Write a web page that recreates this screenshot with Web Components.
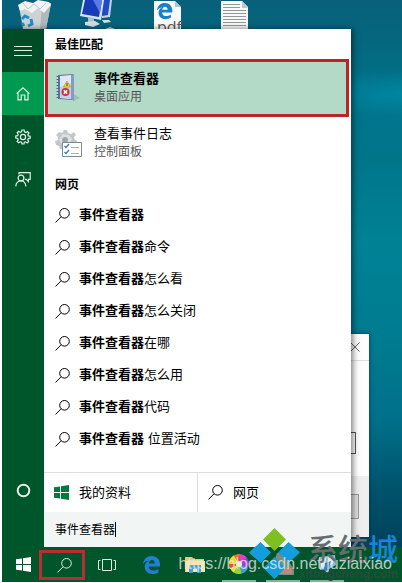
<!DOCTYPE html>
<html lang="zh-CN">
<head>
<meta charset="utf-8">
<meta name="viewport" content="width=device-width, initial-scale=1">
<title>事件查看器</title>
<style>
  html, body { margin: 0; height: 100%; }
  body {
    background: #fff;
    color: #000;
    font-family: "Liberation Sans", "Noto Sans CJK SC", sans-serif;
    overflow: hidden;
  }
</style>
</head>
<body>
<desktop-screen>
  <desktop-icon slot="icon" name="bin" style="left:14px"></desktop-icon>
  <desktop-icon slot="icon" name="computer" style="left:75px"></desktop-icon>
  <desktop-icon slot="icon" name="pdf" style="left:150px"></desktop-icon>
  <desktop-icon slot="icon" name="text" style="left:218px"></desktop-icon>
  <back-window slot="window"></back-window>
  <start-menu slot="menu">
    <menu-rail slot="rail"></menu-rail>
    <result-heading>最佳匹配</result-heading>
    <app-result icon="viewer" selected>事件查看器<span slot="kind">桌面应用</span></app-result>
    <app-result icon="panel">查看事件日志<span slot="kind">控制面板</span></app-result>
    <result-heading>网页</result-heading>
    <web-suggestion><b>事件查看器</b></web-suggestion>
    <web-suggestion><b>事件查看器</b>命令</web-suggestion>
    <web-suggestion><b>事件查看器</b>怎么看</web-suggestion>
    <web-suggestion><b>事件查看器</b>怎么关闭</web-suggestion>
    <web-suggestion><b>事件查看器</b>在哪</web-suggestion>
    <web-suggestion><b>事件查看器</b>怎么用</web-suggestion>
    <web-suggestion><b>事件查看器</b>代码</web-suggestion>
    <web-suggestion><b>事件查看器</b> 位置活动</web-suggestion>
    <search-scope slot="foot"></search-scope>
    <search-box slot="foot" value="事件查看器"></search-box>
  </start-menu>
  <task-bar slot="bar"></task-bar>
  <site-mark slot="mark">https://blog.csdn.net/juziaixiao</site-mark>
</desktop-screen>

<script>
const ICONS = {
  search: `<svg width="15" height="15" viewBox="0 0 15 15" fill="none" stroke="currentColor"><circle cx="9.5" cy="5.3" r="4.8"/><path d="M6 8.8L.6 14.4"/></svg>`,
  windows: `<svg width="15" height="15" viewBox="0 0 15 15" fill="currentColor"><path d="M0 2.2L6 1.4V7H0zM7 1.2L15 0V7H7zM0 8H6V13.6L0 12.8zM7 8H15V15L7 13.8z"/></svg>`,
  menu: `<svg width="18" height="12" viewBox="0 0 18 12" stroke="currentColor"><path d="M0 1.5H18M0 5.5H18M0 10.5H18"/></svg>`,
  home: `<svg width="14" height="14" viewBox="0 0 14 14" fill="none" stroke="currentColor" stroke-width="1.2"><path d="M.6 6.6L7 .9L13.4 6.6M2 5.6V12.9H5.2V8H8.8V12.9H12V5.6"/></svg>`,
  gear: `<svg width="16" height="16" viewBox="0 0 16 16" fill="none" stroke="currentColor" stroke-width="1.2"><path d="M6.9 1H9.1L9.5 2.9L10.9 3.5L12.6 2.5L14 4L12.8 5.6L13.3 6.9L15.2 7.2V9.2L13.3 9.5L12.7 10.9L13.7 12.4L12.2 13.9L10.6 12.8L9.3 13.3L9 15H7L6.6 13.3L5.2 12.8L3.7 13.8L2.2 12.3L3.2 10.8L2.7 9.4L.8 9V7L2.7 6.7L3.2 5.3L2.2 3.7L3.7 2.3L5.2 3.4L6.6 2.9z"/><circle cx="8" cy="8" r="2.6"/></svg>`,
  feedback: `<svg width="16" height="15" viewBox="0 0 16 15" fill="none" stroke="currentColor" stroke-width="1.2"><path d="M4 2.6V.7H15.2V7.4H13.4V9.6L11.2 7.4H10"/><circle cx="6" cy="6" r="2.9"/><path d="M.8 14.4C1 10.9 3 9 6 9C8.8 9 10.6 10.9 10.9 14.4"/></svg>`,
  ring: `<svg width="15" height="15" viewBox="0 0 15 15" fill="none" stroke="currentColor" stroke-width="2"><circle cx="7.5" cy="7.5" r="5.8"/></svg>`,
  tasks: `<svg width="18" height="14" viewBox="0 0 18 14" fill="none" stroke="currentColor"><path d="M4.5 1.5H13.5V12.5H4.5zM2.5 2.5H.5V11.5H2.5M15.5 2.5H17.5V11.5H15.5"/></svg>`,
  edge: `<svg width="17" height="18" viewBox="0 0 17 18"><path fill="#1f80d6" d="M0 8C.5 3 4 0 8.6 0C14 0 17 4 17 8.3V10.5H5.6C5.8 15 11 15.6 15.4 13V16.5C9 19.8 1.8 17.5 1.8 10.8C1.8 8 3.2 6 5.8 4.6C3.5 5 1.5 6 0 8zM5.8 7.4H11.8C11.8 2.8 6.2 3.2 5.8 7.4z"/></svg>`,
  folder: `<svg width="20" height="17" viewBox="0 0 20 17"><path fill="#efc75a" d="M0 1H7L9 3H19V16H0z"/><path fill="#fbe69c" d="M1 5H20V16H1z"/><path fill="#3da2dc" d="M4 9H16V17H12V13H8V17H4z"/></svg>`,
  wheel: `<svg width="20" height="20" viewBox="0 0 20 20"><path fill="#f5d928" d="M10 10L0 10A10 10 0 0 1 5 1.3z"/><path fill="#ef6a3f" d="M10 10L5 1.3A10 10 0 0 1 11 0z"/><path fill="#e13fd3" d="M10 10L11 0A10 10 0 0 1 18 4z"/><path fill="#9b3ddf" d="M10 10L18 4A10 10 0 0 1 19 14z"/><path fill="#36a0e0" d="M10 10L19 14A10 10 0 0 1 13 19.5z"/><path fill="#8fd53a" d="M10 10L13 19.500A10 10 0 0 1 5 18.700z"/><path fill="#f4e032" d="M10 10L5 18.700A10 10 0 0 1 1 14z"/><path fill="#e8502a" d="M10 10L1 14A10 10 0 0 1 0 10z"/><circle cx="10" cy="10" r="3" fill="#e9f5e8"/></svg>`,
  drive: `<svg width="22" height="22" viewBox="0 0 22 22"><path fill="#7e8b7c" d="M5 0H12L22 17V22H0V14z"/><path fill="#b98b7d" d="M2 15H20V21H2z"/></svg>`,
  paint: `<svg width="20" height="18" viewBox="0 0 20 18"><path fill="#8ab9d2" d="M2 2L18 0L19 10L12 14L3 15z"/><path fill="#dcecf3" d="M4 4L9 3L8 12L4 13zM11 3L17 2L16 9L11 11z"/><path fill="#3c81b4" d="M8 8L14 6L11 18L7 15z"/></svg>`,
  viewer: `<svg width="26" height="30" viewBox="0 0 26 30"><path fill="#83a496" opacity=".5" d="M17 20L25 25L18 28z"/><path fill="#5b76a6" d="M3 2L18 1V27L3 26z"/><path fill="#dfe7f5" d="M5 3L16 2V26L5 25z"/><path fill="#c3d0e8" d="M5 14L16 10V26L5 25z"/><path fill="#8799c7" d="M16 2L19 1V28L16 26z"/><path stroke="#52678e" stroke-dasharray="1 2" stroke-width="3" d="M3 3V25"/><path fill="#f1d444" stroke="#a38e25" stroke-width=".6" d="M12 8L15.500 14H8.500z"/><path stroke="#5b4d0b" d="M12 10V13"/><circle cx="10.500" cy="19" r="4" fill="#c9313c"/><path stroke="#fff" stroke-width="1.500" d="M8.800 17.300L12.200 20.700M12.200 17.300L8.800 20.700"/></svg>`,
  panel: `<svg width="27" height="29" viewBox="0 0 27 29"><path fill="#c3c7ca" d="M9 1H12L13 4L16 5L19 3L21 6L19 8L20 11L22 12V15L19 16L17 19L11 20L5 20L4 17L1 16L0 12L3 11L3 8L1 6L4 3L7 4z"/><path fill="#dfe1e3" d="M8 5L14 6L17 10L14 15L8 16L4 11z"/><circle cx="10" cy="11" r="3" fill="#9fa6ab"/><path fill="#fff" stroke="#7c8a94" d="M7.500 13.500H26.500V27.500H7.500z"/><path fill="none" stroke="#347dbd" stroke-width="1.300" d="M9.500 17L11 18.500L14 15M9.500 23L11 24.500L14 21"/><path stroke="#a7b1b8" d="M16 18.500H24M16 24.500H24"/></svg>`,
  bin: `<svg width="40" height="29" viewBox="0 0 40 29"><path fill="#cbd3d6" d="M5 6L37 3L32 29H9z"/><path fill="#aeb9be" d="M28 7L37 4L32 29H26z"/><path fill="#f1f4f5" d="M4 5L11 1L19 3L24 0L35 2L37 5L30 13L24 8L18 13L11 9L6 11z"/><path stroke="#bac6cb" fill="none" d="M9 3L14 9L20 4L26 9L32 3"/><g fill="none" stroke="#2489cb" stroke-width="3"><path d="M8 19L11 16L15 18M17 19L18 24L14 26M10 26L8 23"/></g></svg>`,
  computer: `<svg width="46" height="29" viewBox="0 0 46 29"><path fill="#c3d5e2" d="M22 0H37L35 17L27 18z"/><path fill="#234ac5" d="M24 0H35L33 15L27 16z"/><path fill="#d7e4ed" d="M8 0L29 0L26 20L5 16z"/><path fill="#163cba" d="M10 0L27 0L24 17L7 14z"/><path fill="#5a7be0" d="M18 0L27 0L25 13z"/><path fill="#a8c0cc" d="M13 17L19 18V23H13z"/><path fill="#d3dfe4" d="M10 22L20 21L25 24L18 27L10 25zM27 20L34 20L36 22L29 23z"/><path fill="#b8ced7" d="M30 29L35 27L40 29z"/></svg>`,
  text: `<svg width="32" height="29" viewBox="0 0 32 29"><path fill="#f8f8f6" d="M3 1H24L30 7V29H3z"/><path fill="#bfc8cb" d="M24 1L30 8H24z"/><path stroke="#93989a" d="M5 4.500H22M5 7.500H22M5 10.500H28M5 13.500H28M5 16.500H28M5 19.500H28M5 22.500H28M5 25.500H28"/></svg>`,
  page: `<svg width="34" height="29" viewBox="0 0 34 29"><path fill="#f9fafa" d="M4 1H25L31 7V29H4z"/><path fill="#a9c7d5" d="M25 1L31 7H25z"/><path transform="translate(7 3) scale(.9)" fill="#1680cc" d="M0 8C.5 3 4 0 8.600 0C14 0 17 4 17 8.300V10.500H5.600C5.800 15 11 15.600 15.400 13V16.500C9 19.800 1.800 17.500 1.800 10.800C1.800 8 3.200 6 5.800 4.600C3.500 5 1.500 6 0 8zM5.800 7.400H11.800C11.800 2.800 6.200 3.200 5.800 7.400z"/></svg>`,
  close: `<svg width="10" height="10" viewBox="0 0 10 10" stroke="#666"><path d="M.5 .5L9.500 9.500M9.500 .5L.5 9.500"/></svg>`
};

// shared reset for the buttons inside each shadow root
const BUTTON = `
  button {
    font: inherit;
    color: inherit;
    background: none;
    border: 0;
    padding: 0;
    margin: 0;
    text-align: left;
  }
  svg { display: block; flex: none; }
`;

class DesktopScreen extends HTMLElement {
  constructor() {
    super();
    this.attachShadow({ mode: 'open' }).innerHTML = `
      <style>
        :host {
          position: relative;
          display: flex;
          flex-direction: column;
          box-sizing: border-box;
          min-height: 100vh;
          padding: 29px 0 1px 2px;
          overflow: hidden;
          background:
            radial-gradient(ellipse 90px 24px at 100% 94px, #0086a0, transparent),
            linear-gradient(#08607a, #04687f 8%, #00748c 17%, #00758a 27%, #008295 42%, #007a8f 60%, #00708a 72%, #00526b 84%, #00415a 94%);
        }
        .edge { position: absolute; background: #fff; }
        .left { left: 0; top: 0; bottom: 0; width: 2px; }
        .bottom { left: 0; right: 0; bottom: 0; height: 1px; }
      </style>
      <slot name="icon"></slot>
      <slot name="window"></slot>
      <slot name="menu"></slot>
      <slot name="bar"></slot>
      <slot name="mark"></slot>
      <div class="edge left"></div>
      <div class="edge bottom"></div>
    `;
  }
}

class DesktopIcon extends HTMLElement {
  constructor() {
    super();
    const name = this.getAttribute('name');
    this.attachShadow({ mode: 'open' }).innerHTML = `
      <style>
        :host { position: absolute; top: 0; height: 29px; }
        svg { display: block; }
        span {
          position: absolute;
          left: 7px;
          top: 17px;
          font: 16px/20px "Open Sans", sans-serif;
          color: #555;
        }
      </style>
      ${name == 'pdf' ? ICONS.page + '<span>pdf</span>' : ICONS[name]}
    `;
  }
}

class BackWindow extends HTMLElement {
  constructor() {
    super();
    this.attachShadow({ mode: 'open' }).innerHTML = `
      <style>
        ${BUTTON}
        :host {
          position: absolute;
          top: 334px;
          right: 33px;
          width: 60px;
          height: 203px;
          display: flex;
          flex-direction: column;
          background: #fdfdfd;
          box-shadow: 0 0 4px #003a4a;
        }
        header { display: flex; justify-content: flex-end; align-items: center; height: 26px; padding-right: 9px; border-bottom: 1px solid #ddd; }
        main { flex: 1; display: flex; justify-content: flex-end; align-items: flex-end; padding: 0 13px 22px 0; }
        main button { width: 40px; height: 22px; border: 1px solid #555; }
        footer { display: flex; justify-content: flex-end; align-items: center; height: 61px; padding-right: 10px; background: #eee; }
        footer button { width: 40px; height: 25px; border: 1px solid #999; background: #ddd; }
      </style>
      <header><button aria-label="close">${ICONS.close}</button></header>
      <main><button aria-label="select"></button></main>
      <footer><button aria-label="ok"></button></footer>
    `;
  }
}

class StartMenu extends HTMLElement {
  constructor() {
    super();
    this.attachShadow({ mode: 'open' }).innerHTML = `
      <style>
        :host {
          position: relative;
          flex: 1;
          display: flex;
          margin-right: 51px;
          box-shadow: 2px 0 6px rgba(0, 0, 0, .5);
        }
        .panel { flex: 1; display: flex; flex-direction: column; background: #fff; }
        .results { flex: 1; display: flex; flex-direction: column; }
      </style>
      <slot name="rail"></slot>
      <div class="panel">
        <div class="results"><slot></slot></div>
        <slot name="foot"></slot>
      </div>
    `;
  }
}

class MenuRail extends HTMLElement {
  constructor() {
    super();
    this.attachShadow({ mode: 'open' }).innerHTML = `
      <style>
        ${BUTTON}
        :host { display: flex; flex-direction: column; width: 42px; background: #00562b; color: #e2f2e8; }
        button { display: flex; justify-content: center; align-items: center; height: 43px; }
        .top { background: #004c26; }
        .on { background: #00994f; }
        .last { margin-top: auto; margin-bottom: 35px; }
      </style>
      <button class="top" aria-label="menu">${ICONS.menu}</button>
      <button class="on" aria-label="home">${ICONS.home}</button>
      <button aria-label="settings">${ICONS.gear}</button>
      <button aria-label="feedback">${ICONS.feedback}</button>
      <button class="last" aria-label="cortana">${ICONS.ring}</button>
    `;
  }
}

class ResultHeading extends HTMLElement {
  constructor() {
    super();
    this.attachShadow({ mode: 'open' }).innerHTML = `
      <style>
        :host { display: block; padding-left: 11px; }
        h2 { margin: 0; padding-top: 2px; font-size: 12px; line-height: 28px; font-weight: 700; }
      </style>
      <h2><slot></slot></h2>
    `;
  }
}

class AppResult extends HTMLElement {
  constructor() {
    super();
    this.attachShadow({ mode: 'open' }).innerHTML = `
      <style>
        ${BUTTON}
        :host { display: block; height: 52px; padding: 0 5px; margin: 0 2px 0 1px; }
        :host([selected]) {
          padding: 0 2px;
          border: 3px solid #be2328;
          background: #b2dac7;
        }
        :host([selected]) .name { font-weight: 700; }
        button { display: flex; align-items: center; width: 100%; height: 100%; padding-left: 5px; }
        .icon { width: 39px; }
        .text { display: flex; flex-direction: column; padding-bottom: 1px; }
        .name { font-size: 13px; line-height: 19px; }
        .kind { font-size: 12px; line-height: 18px; color: #555; }
      </style>
      <button>
        <span class="icon">${ICONS[this.getAttribute('icon')]}</span>
        <span class="text">
          <span class="name"><slot></slot></span>
          <span class="kind"><slot name="kind"></slot></span>
        </span>
      </button>
    `;
  }
}

class WebSuggestion extends HTMLElement {
  constructor() {
    super();
    this.attachShadow({ mode: 'open' }).innerHTML = `
      <style>
        ${BUTTON}
        :host { display: block; height: 32px; }
        button { display: flex; align-items: center; gap: 9px; width: 100%; height: 100%; padding-left: 11px; font-size: 13px; line-height: 20px; }
        span { white-space: pre; }
      </style>
      <button>${ICONS.search}<span><slot></slot></span></button>
    `;
  }
}

class SearchScope extends HTMLElement {
  constructor() {
    super();
    this.attachShadow({ mode: 'open' }).innerHTML = `
      <style>
        ${BUTTON}
        :host { display: flex; height: 39px; border-top: 1px solid #ddd; font-size: 13px; line-height: 20px; }
        button { flex: 1; display: flex; align-items: center; gap: 10px; padding-left: 10px; }
        button + button { border-left: 1px solid #ddd; }
        .mine svg { color: #007a43; }
      </style>
      <button class="mine">${ICONS.windows}我的资料</button>
      <button>${ICONS.search}网页</button>
    `;
  }
}

class SearchBox extends HTMLElement {
  constructor() {
    super();
    this.attachShadow({ mode: 'open' }).innerHTML = `
      <style>
        :host { display: flex; align-items: center; height: 35px; padding-left: 11px; background: #f1f5f4; }
        input {
          field-sizing: content;
          font: inherit;
          font-size: 12px;
          line-height: 18px;
          color: #000;
          background: none;
          border: 0;
          padding: 0;
          outline: 0;
        }
        .caret { width: 1px; height: 15px; background: #000; }
      </style>
      <input type="text" aria-label="search" value="${this.getAttribute('value')}">
      <span class="caret"></span>
    `;
  }
}

class TaskBar extends HTMLElement {
  constructor() {
    super();
    this.attachShadow({ mode: 'open' }).innerHTML = `
      <style>
        ${BUTTON}
        :host { position: relative; display: flex; height: 35px; background: #00552b; color: #dcefe2; }
        button { display: flex; justify-content: center; align-items: center; width: 44px; box-sizing: border-box; }
        .start { width: 37px; padding-left: 5px; color: #fff; }
        .find { width: 46px; height: 30px; margin: 3px 0 2px; border: 3px solid #be2c33; padding-left: 4px; }
        .open { border-bottom: 2px solid #79b894; width: 34px; margin: 0 5px; }
      </style>
      <button class="start" aria-label="start">${ICONS.windows}</button>
      <button class="find" aria-label="search">${ICONS.search}</button>
      <button aria-label="task view">${ICONS.tasks}</button>
      <button aria-label="edge">${ICONS.edge}</button>
      <button aria-label="files">${ICONS.folder}</button>
      <button class="open" aria-label="colours">${ICONS.wheel}</button>
      <button class="open" aria-label="drive">${ICONS.drive}</button>
      <button class="open" aria-label="paint">${ICONS.paint}</button>
    `;
  }
}

class SiteMark extends HTMLElement {
  constructor() {
    super();
    this.attachShadow({ mode: 'open' }).innerHTML = `
      <style>
        :host { position: absolute; right: 4px; bottom: 0; width: 220px; height: 55px; pointer-events: none; white-space: nowrap; }
        svg, span { position: absolute; }
        svg { right: 98px; top: 0; }
        .name { right: 0; top: 4px; font-size: 30px; line-height: 36px; font-weight: 500; color: #666e70; }
        .name i { font-style: normal; color: #1785d8; }
        .site { right: 0; top: 38px; font-size: 12px; line-height: 16px; color: #284c3b; font-weight: 700; }
        .url { right: 6px; top: 25px; font: 16px/22px "Liberation Sans", sans-serif; color: rgba(225, 232, 229, .8); }
      </style>
      <svg width="51" height="52" viewBox="0 0 51 52">
        <path fill="#7fbf22" d="M25.500 0L37 11.500L25.500 23L14 11.500z"/>
        <path fill="#139ddd" d="M11.500 14L22 24.500L11.500 35L0 24.500zM39.500 14L51 24.500L39.500 35L29 24.500zM25.500 29L36.500 40L25.500 51L14.500 40z"/>
      </svg>
      <span class="name">系统<i>城</i></span>
      <span class="site">xitongcheng.com</span>
      <span class="url"><slot></slot></span>
    `;
  }
}

customElements.define('desktop-screen', DesktopScreen);
customElements.define('desktop-icon', DesktopIcon);
customElements.define('back-window', BackWindow);
customElements.define('start-menu', StartMenu);
customElements.define('menu-rail', MenuRail);
customElements.define('result-heading', ResultHeading);
customElements.define('app-result', AppResult);
customElements.define('web-suggestion', WebSuggestion);
customElements.define('search-scope', SearchScope);
customElements.define('search-box', SearchBox);
customElements.define('task-bar', TaskBar);
customElements.define('site-mark', SiteMark);
</script>
</body>
</html>
